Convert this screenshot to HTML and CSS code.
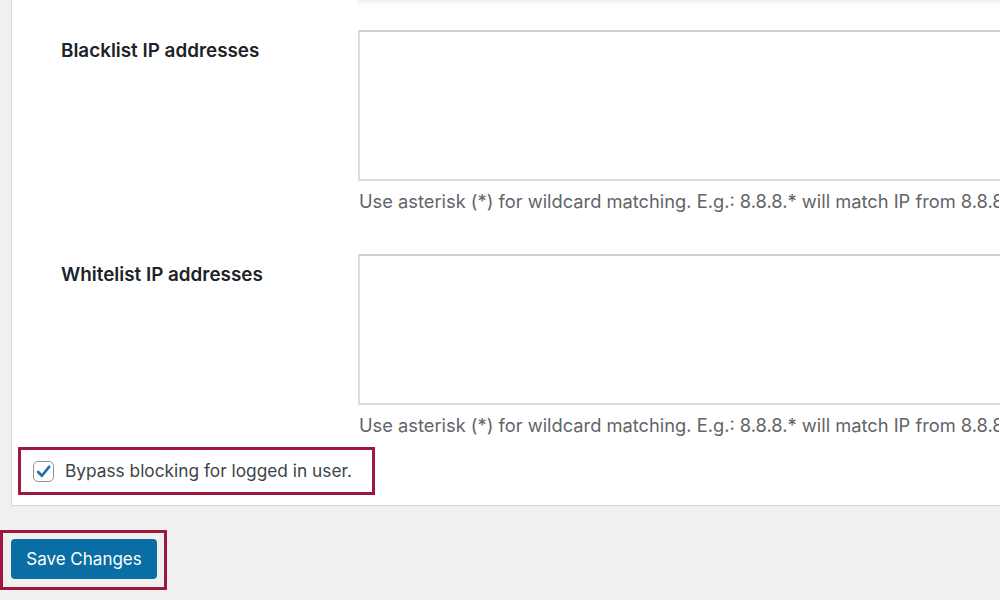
FILE: index.html
```html
<!DOCTYPE html>
<html>
<head>
<meta charset="utf-8">
<link rel="stylesheet" href="styles.css">
</head>
<body>
<div class="panel">
  <div class="prev-shadow"></div>
  <div class="row">
    <div class="label">Blacklist IP addresses</div>
    <div class="field">
      <div class="textarea"></div>
      <p class="help">Use asterisk (*) for wildcard matching. E.g.: 8.8.8.* will match IP from 8.8.8.0 to 8.8.8.255.</p>
    </div>
  </div>
  <div class="row row-second">
    <div class="label">Whitelist IP addresses</div>
    <div class="field">
      <div class="textarea"></div>
      <p class="help">Use asterisk (*) for wildcard matching. E.g.: 8.8.8.* will match IP from 8.8.8.0 to 8.8.8.255.</p>
    </div>
  </div>
  <div class="highlight check-box">
    <span class="checkbox">
      <svg width="17" height="17" viewBox="0 0 16 16"><path d="M3 8.4 L6.5 12 L13.3 3.6" fill="none" stroke="#2271b1" stroke-width="2.6" stroke-linecap="round" stroke-linejoin="round"/></svg>
    </span>
    <span class="check-label">Bypass blocking for logged in user.</span>
  </div>
</div>
<div class="highlight save-box">
  <button class="button">Save Changes</button>
</div>
</body>
</html>
```
FILE: styles.css
```css
html, body {
  margin: 0;
  padding: 0;
  background: #f0f0f1;
  overflow: hidden;
  width: 1000px;
  height: 600px;
  font-family: Inter, "Noto Sans", sans-serif;
}
.panel {
  margin-left: 11px;
  width: 1200px;
  background: #fff;
  border-left: 1px solid #d6d7d9;
  border-bottom: 1px solid #d6d7d9;
  padding: 30px 0 10px 0;
  position: relative;
}
.prev-shadow {
  position: absolute;
  left: 345px;
  top: 0;
  right: 0;
  height: 5px;
  background: linear-gradient(#efefef, #fff);
}
.row {
  display: flex;
}
.row-second {
  margin-top: 41px;
}
.label {
  width: 297px;
  padding-left: 49px;
  padding-top: 9px;
  font-size: 18.85px;
  line-height: 24px;
  font-weight: 600;
  color: #1d2327;
}
.field {
  flex: 1;
}
.textarea {
  height: 147px;
  border: 2px solid #dcdcde;
  border-top-color: #d2d2d4;
  background: #fff;
}
.help {
  margin: 8px 0 0 1px;
  font-size: 18.3px;
  line-height: 24px;
  color: #5f656b;
  white-space: nowrap;
  width: 640px;
  overflow: hidden;
}
.highlight {
  border: 3px solid #a0173e;
  box-sizing: border-box;
}
.check-box {
  margin: 10px 0 0 6px;
  width: 357px;
  height: 48px;
  display: flex;
  align-items: center;
  padding-left: 12px;
}
.checkbox {
  width: 21px;
  height: 21px;
  box-sizing: border-box;
  border: 1px solid #8c8f94;
  border-radius: 5px;
  display: flex;
  align-items: center;
  justify-content: center;
  background: #fff;
  margin-right: 11px;
}
.check-label {
  font-size: 17.3px;
  color: #3c434a;
  line-height: 24px;
}
.save-box {
  margin-top: 24px;
  width: 167px;
  height: 60px;
  padding: 6px 0 0 8px;
}
.button {
  width: 146px;
  height: 40px;
  border: none;
  border-radius: 4px;
  background: #0a6ea4;
  color: #fff;
  font-family: Inter, "Noto Sans", sans-serif;
  font-size: 17px;
  padding: 0;
}
```
